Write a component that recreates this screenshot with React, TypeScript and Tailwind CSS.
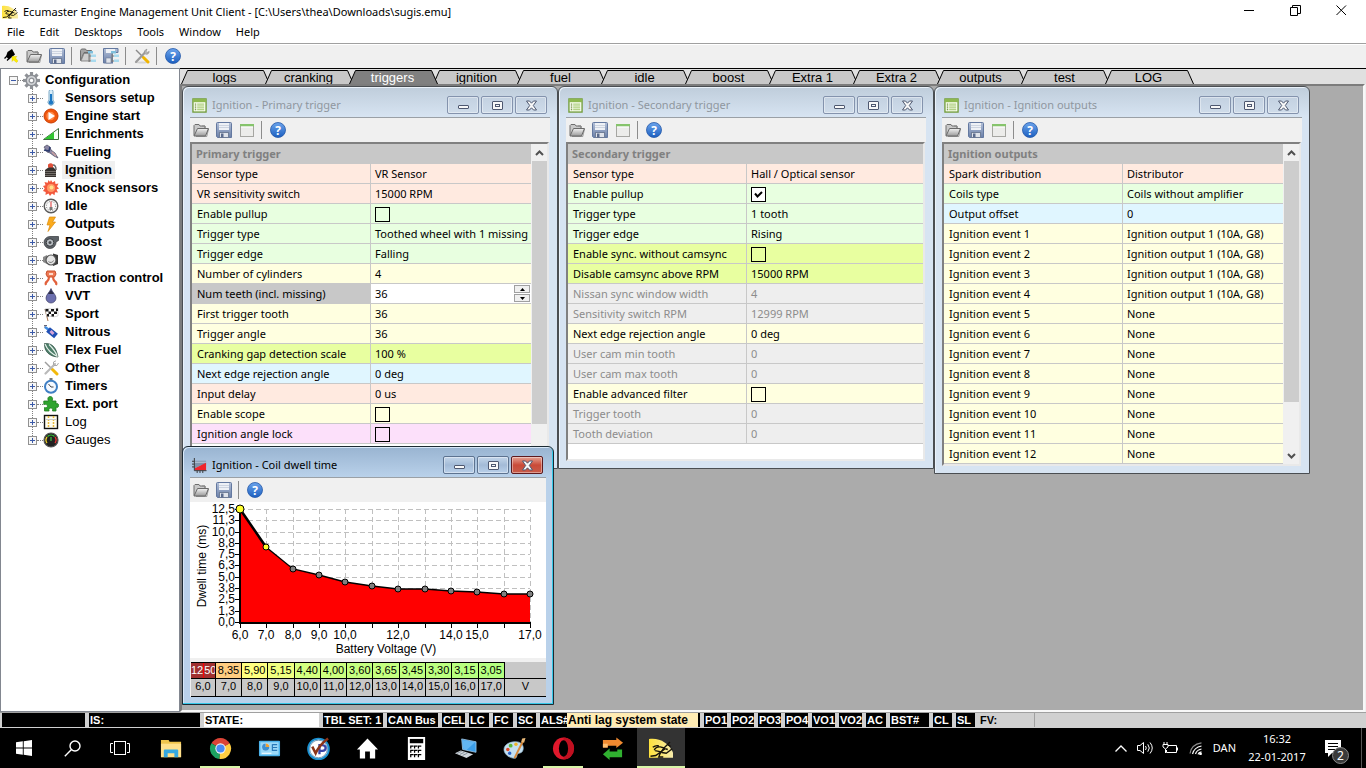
import { useState } from "react";
import type { ReactNode } from "react";

// Row tints used by the property grids
const TINT = {
  pink: "bg-[#ffeae0] text-black",
  green: "bg-[#e8ffe0] text-black",
  yellow: "bg-[#ffffe0] text-black",
  lime: "bg-[#e8ffa0] text-black",
  blue: "bg-[#e0f6ff] text-black",
  magenta: "bg-[#fce0fa] text-black",
  off: "bg-[#eeeeee] text-[#8c8c8c]",
};

type Row = {
  label: string;
  tint: keyof typeof TINT;
  value?: string;
  checked?: boolean;
  spin?: boolean;
};

const MENU = ["File", "Edit", "Desktops", "Tools", "Window", "Help"];

const TABS = [
  "logs",
  "cranking",
  "triggers",
  "ignition",
  "fuel",
  "idle",
  "boost",
  "Extra 1",
  "Extra 2",
  "outputs",
  "test",
  "LOG",
];

const PRIMARY: Row[] = [
  { label: "Sensor type", tint: "pink", value: "VR Sensor" },
  { label: "VR sensitivity switch", tint: "pink", value: "15000 RPM" },
  { label: "Enable pullup", tint: "green", checked: false },
  { label: "Trigger type", tint: "green", value: "Toothed wheel with 1 missing" },
  { label: "Trigger edge", tint: "green", value: "Falling" },
  { label: "Number of cylinders", tint: "yellow", value: "4" },
  { label: "Num teeth (incl. missing)", tint: "yellow", value: "36", spin: true },
  { label: "First trigger tooth", tint: "yellow", value: "36" },
  { label: "Trigger angle", tint: "yellow", value: "36" },
  { label: "Cranking gap detection scale", tint: "lime", value: "100 %" },
  { label: "Next edge rejection angle", tint: "blue", value: "0 deg" },
  { label: "Input delay", tint: "pink", value: "0 us" },
  { label: "Enable scope", tint: "yellow", checked: false },
  { label: "Ignition angle lock", tint: "magenta", checked: false },
];

const SECONDARY: Row[] = [
  { label: "Sensor type", tint: "pink", value: "Hall / Optical sensor" },
  { label: "Enable pullup", tint: "green", checked: true },
  { label: "Trigger type", tint: "green", value: "1 tooth" },
  { label: "Trigger edge", tint: "green", value: "Rising" },
  { label: "Enable sync. without camsync", tint: "lime", checked: false },
  { label: "Disable camsync above RPM", tint: "lime", value: "15000 RPM" },
  { label: "Nissan sync window width", tint: "off", value: "4" },
  { label: "Sensitivity switch RPM", tint: "off", value: "12999 RPM" },
  { label: "Next edge rejection angle", tint: "yellow", value: "0 deg" },
  { label: "User cam min tooth", tint: "off", value: "0" },
  { label: "User cam max tooth", tint: "off", value: "0" },
  { label: "Enable advanced filter", tint: "yellow", checked: false },
  { label: "Trigger tooth", tint: "off", value: "0" },
  { label: "Tooth deviation", tint: "off", value: "0" },
];

const OUTPUTS: Row[] = [
  { label: "Spark distribution", tint: "pink", value: "Distributor" },
  { label: "Coils type", tint: "green", value: "Coils without amplifier" },
  { label: "Output offset", tint: "blue", value: "0" },
  ...Array.from({ length: 12 }, (_, i): Row => ({
    label: `Ignition event ${i + 1}`,
    tint: "yellow",
    value: i < 4 ? "Ignition output 1 (10A, G8)" : "None",
  })),
];

/* ---------- small icons ---------- */

function Svg({ children, size = 16 }: { children: ReactNode; size?: number }) {
  return (
    <svg width={size} height={size} viewBox="0 0 16 16" aria-hidden className="block shrink-0">
      {children}
    </svg>
  );
}

function FolderIcon() {
  return (
    <Svg>
      <path d="M1 13.5V3.5L2 2.5h4l1 1.5h5v3" fill="#c9c9c9" stroke="#6e6e6e" />
      <path d="M9 4l3 0 0 3" fill="none" stroke="#8a8a8a" />
      <path d="M1 14L4.5 6.5H15.5L12.5 14Z" fill="url(#fold)" stroke="#6a6a6a" />
      <path d="M15.5 7L13.8 14.5H3" fill="none" stroke="#555" strokeOpacity=".5" />
    </Svg>
  );
}

function SaveIcon() {
  return (
    <Svg>
      <path d="M.5 1.5Q.5.5 1.5.5h13q1 0 1 1v14H1.5l-1-1Z" fill="url(#flop)" stroke="#6479a0" />
      <rect x="3" y="1" width="10" height="7" fill="#eef1f6" />
      <path d="M3 3.5h10M3 5.5h10" stroke="#cdd4e0" />
      <rect x="3.5" y="10.5" width="9" height="5" fill="#dfe3ea" stroke="#707e98" />
      <rect x="5" y="11.5" width="2.5" height="4" fill="#5a6a8c" />
    </Svg>
  );
}

function SheetIcon() {
  return (
    <Svg>
      <rect x="1.5" y="2.5" width="13" height="12" fill="#ececea" stroke="#a6a6a2" />
      <rect x="1" y="2" width="14" height="2.5" fill="#86c46c" />
      <path d="M2 5h12" stroke="#fff" />
    </Svg>
  );
}

function HelpIcon() {
  return (
    <Svg>
      <circle cx="8" cy="8" r="7.5" fill="url(#help)" stroke="#2458a8" strokeWidth=".8" />
      <text x="8" y="12.5" textAnchor="middle" fill="#fff" fontSize="12" fontWeight="bold" fontFamily="Open Sans, sans-serif">
        ?
      </text>
    </Svg>
  );
}

function PlugIcon() {
  return (
    <Svg>
      <path d="M4.500 4L9 1l3 5.500L6 11.500 3 8.500Z" fill="#000" />
      <path d="M4 8L1.500 10.500M6 10.500l-2 2" stroke="#000" strokeWidth="1.300" />
      <path d="M9 8.500h5L12.500 10l2.500 3-1.500 1.500-3-2.500L9 13.500Z" fill="#ffee00" stroke="#d8c800" strokeWidth=".4" />
    </Svg>
  );
}

function TreeOverlay() {
  return (
    <g>
      <path d="M9 5v9M9 8h3M9 13h3" stroke="#777" fill="none" />
      <rect x="8" y="3" width="5" height="2.500" fill="#7fbfdc" />
      <rect x="11" y="6.500" width="5" height="2.500" fill="#a8daee" />
      <rect x="11" y="11.500" width="5" height="2.500" fill="#a8daee" />
    </g>
  );
}

function FolderTreeIcon() {
  return (
    <Svg>
      <path d="M.5 12.500V2.500L1.500 1h4l1 1.500h5v2H4Z" fill="#a5a5a5" stroke="#6e6e6e" />
      <path d="M1 13L4 5.500h6V13Z" fill="#cfcfcf" stroke="#777" strokeWidth=".8" />
      <TreeOverlay />
    </Svg>
  );
}

function SaveTreeIcon() {
  return (
    <Svg>
      <path d="M.5.5h14.500v4H10v10.500H.5Z" fill="url(#flop)" stroke="#6479a0" />
      <rect x="3" y="1" width="9" height="4" fill="#eef1f6" />
      <rect x="3" y="10" width="5" height="5" fill="#dfe3ea" stroke="#707e98" strokeWidth=".6" />
      <path d="M10 5h6v11h-6Z" fill="#f0f0f0" />
      <TreeOverlay />
    </Svg>
  );
}

function ToolsIcon() {
  return (
    <Svg>
      <ellipse cx="8" cy="14.500" rx="6" ry="1" fill="#000" opacity=".12" />
      <path d="M2 2l8 8" stroke="#8b8b8b" strokeWidth="1.400" />
      <path d="M9.500 9.500l4.500 4.500" stroke="#f0b400" strokeWidth="3" strokeLinecap="round" />
      <path d="M2 14l9-9.500" stroke="#9b9b9b" strokeWidth="2.200" strokeLinecap="round" />
      <path d="M10.500 5.500c-.8-2 .5-4 2.500-4.300L12 3.200l1.200 1.200 2-1c0 2.300-2 3.500-4 2.600" fill="#b5b5b5" stroke="#7c7c7c" strokeWidth=".5" />
    </Svg>
  );
}

function GridWinIcon() {
  return (
    <Svg>
      <rect x="1" y="1" width="14" height="14" fill="#fbfff2" stroke="#6f9a36" strokeWidth="1.400" />
      <rect x="1" y="1" width="14" height="3.500" fill="#8db84f" />
      <path d="M3 6.500h1.500M3 8.500h1.500M3 10.500h1.500M3 12.500h1.500" stroke="#55761f" />
      <path d="M5.500 6.500H13M5.500 8.500H13M5.500 10.500H13M5.500 12.500H13" stroke="#98c05e" />
    </Svg>
  );
}

function ChartWinIcon() {
  return (
    <Svg>
      <path d="M3 3h12v4L9 8l-6 3Z" fill="#7f93ab" />
      <path d="M3 4.500h12" stroke="#c3cfdd" />
      <path d="M3 11L8 8.500 15 5v8H3Z" fill="#f0242c" />
      <path d="M2.500 0v13.500H15.500M0 3.500h2.500M0 6.500h2.500M0 9.500h2.500M5.500 13.500V16M8.500 13.500V16M11.500 13.500V16" stroke="#333" fill="none" />
    </Svg>
  );
}

function EcuLogo({ size = 16 }: { size?: number }) {
  return (
    <Svg size={size}>
      <path d="M0 2c7-1 13 2.500 16 9v3.500H0Z" fill="url(#ecu)" />
      <path
        d="M1 13.500l3.500-.5 3.500-2.500-4-.8M3.500 9.500q1-2.500 4-2.200L10 8l4-4M10 8l-2.500 3.500-1 2.500h3M8.500 11l3 .5 4-3M12 5.500l2.500 1.500M11 8.500l1.500.5M2.500 7.500q2-1.500 4-1"
        stroke="#17130a"
        strokeWidth=".9"
        fill="none"
      />
      <path d="M4.500 13l3.500-3 2.500-2.500.8 1.200L8 11Z" fill="#17130a" />
    </Svg>
  );
}

/* ---------- tree ---------- */

const gearTeeth = [0, 45, 90, 135, 180, 225, 270, 315];

const TREE: { label: string; icon: ReactNode; plain?: boolean }[] = [
  {
    label: "Sensors setup",
    icon: (
      <>
        <path d="M6 1.500a2 2 0 0 1 4 0v8.500a3 3 0 1 1-4 0Z" fill="#d9edf8" stroke="#7da9c6" />
        <path d="M8 4v8" stroke="#1d78c4" strokeWidth="2" />
        <circle cx="8" cy="12.500" r="2.200" fill="#1d78c4" />
      </>
    ),
  },
  {
    label: "Engine start",
    icon: (
      <>
        <circle cx="8" cy="8" r="7" fill="#f0560c" stroke="#c93e04" />
        <circle cx="7.500" cy="8" r="4.200" fill="#ff8a4a" />
        <path d="M5.500 4v8l6.500-4Z" fill="#fff" />
      </>
    ),
  },
  {
    label: "Enrichments",
    icon: (
      <>
        <path d="M.5 13.500L15.500 2.500v11Z" fill="#f4fff4" stroke="#3d6b3d" />
        <path d="M1.500 13L11 6v7Z" fill="#2fc62f" />
      </>
    ),
  },
  {
    label: "Fueling",
    icon: (
      <>
        <path d="M1 3l3-2 3 2 1 3 4 3 3 5-4-2-4-3-3-1Z" fill="#8b86a5" stroke="#4b4a60" strokeWidth=".7" />
        <path d="M1 6l5 1 1-4" stroke="#2d3c70" strokeWidth="1.600" fill="none" />
        <path d="M9 8l4 4" stroke="#c9a0a0" strokeWidth="1.600" />
      </>
    ),
  },
  {
    label: "Ignition",
    icon: (
      <>
        <path d="M2 15V8l4-3h4l3 3v7Z" fill="#37322f" />
        <path d="M2 9.500h11M2 11.500h11M2 13.500h11" stroke="#8f8984" strokeWidth=".7" />
        <path d="M5 5.500V2.500q3-2.500 5 0v3Z" fill="#e0503a" />
        <path d="M10 3q3 0 3 5" stroke="#666" fill="none" strokeWidth="1.500" />
      </>
    ),
  },
  {
    label: "Knock sensors",
    icon: (
      <>
        <path
          d="M8 0l1.500 2.500L12 1l.5 3 3-.5L14 6.500l2 2-2.500 1L15 12.500l-3-.3-.5 3L9 13.500 7 16l-1.500-2.500L2.500 15l.2-3L0 11l1.700-2.500L0 6l2.500-.8L1.500 2l3.200.8L5.500 0 7 2Z"
          fill="#f3583c"
        />
        <circle cx="8" cy="8" r="4" fill="#ff9a66" />
        <circle cx="8.500" cy="7.500" r="2" fill="#ffe08a" />
      </>
    ),
  },
  {
    label: "Idle",
    icon: (
      <>
        <circle cx="8" cy="8" r="6.800" fill="#fafafa" stroke="#5b5b5b" strokeWidth="1.400" />
        <circle cx="8" cy="8" r="4.600" fill="none" stroke="#777" strokeDasharray="1 1.400" />
        <path d="M8 9V3.500" stroke="#d33" />
        <rect x="6.500" y="9" width="3" height="3" fill="#777" />
      </>
    ),
  },
  {
    label: "Outputs",
    icon: <path d="M6.500 1h6L9.500 6h3L5 15.500 7 9H4Z" fill="#fbab1c" stroke="#d88a10" strokeWidth=".7" />,
  },
  {
    label: "Boost",
    icon: (
      <>
        <path d="M7 2.500h8.500v4L13 8a6 6 0 1 1-6-5.500Z" fill="#5d6268" stroke="#33373b" strokeWidth=".7" />
        <circle cx="7" cy="8.500" r="3.800" fill="#b9bec3" stroke="#3a3d40" />
        <circle cx="7" cy="8.500" r="1.500" fill="#4b4e52" />
      </>
    ),
  },
  {
    label: "DBW",
    icon: (
      <>
        <path d="M0 5l4-2v9l-4-2Z" fill="#888" />
        <path d="M10 1.500l5 1.500v9l-5 2Z" fill="#3b3b3b" />
        <circle cx="8" cy="8" r="5" fill="#e6e6e6" stroke="#555" strokeWidth="1.200" />
        <path d="M5.500 9.500a3 3 0 0 0 5-1" stroke="#777" fill="none" />
      </>
    ),
  },
  {
    label: "Traction control",
    icon: (
      <>
        <path d="M4 1h8l1 3-1.500 3h-7L3 4Z" fill="#ee7a55" stroke="#c7502d" />
        <path d="M6 7q0 3-2 4.500T3 15M10 7q0 3 2 4.500t1 3.500" stroke="#e2613c" strokeWidth="2.200" fill="none" />
        <path d="M6 3h4v2H6Z" fill="#ffd9c9" />
      </>
    ),
  },
  {
    label: "VVT",
    icon: (
      <>
        <path d="M8 .5c1 3.500 5 6 5 9.500a5 5 0 0 1-10 0C3 6.500 7 4 8 .5Z" fill="#6c6fae" stroke="#3c3e66" strokeWidth=".7" />
        <path d="M8 1c.5 2 2 3.500 3 5H5c1-1.500 2.500-3 3-5Z" fill="#2e2f48" />
      </>
    ),
  },
  {
    label: "Sport",
    icon: (
      <>
        <path d="M2 3l3 12" stroke="#a7744e" />
        <path d="M2 3c4-2 8 2 13-1v8c-5 2-8-1-11 1Z" fill="#fff" stroke="#999" strokeWidth=".4" />
        <path
          d="M2.500 3h3v2.500h-3ZM8 3h3v2.500H8ZM5.500 5.500H8V8H5.500ZM11 5.500h3V8h-3ZM4 8h2v2.500H4ZM8.500 8h2.500v2.500H8.500ZM13 2.500h2V5h-2Z"
          fill="#161616"
        />
      </>
    ),
  },
  {
    label: "Nitrous",
    icon: (
      <>
        <path d="M1 1.500h3M2 1v3" stroke="#667" />
        <path d="M2 3l4 3" stroke="#3f8ce0" strokeWidth="2.600" />
        <path d="M5 5.500l8 6.500" stroke="#1f4fb4" strokeWidth="6" strokeLinejoin="round" />
        <path d="M7.500 7l3 3" stroke="#d7a4d8" strokeWidth="3" />
      </>
    ),
  },
  {
    label: "Flex Fuel",
    icon: (
      <>
        <path d="M1.500 1.500C8 1 13 4 15 15 7 14.500 1 10 1.500 1.500Z" fill="#4b7d68" stroke="#2c4d40" strokeWidth=".7" />
        <path d="M2 2c2 5 7 10 12.500 12.500M6 2.500c3 3 6 6 8 11" stroke="#e5efe9" fill="none" strokeWidth="1.200" />
      </>
    ),
  },
  {
    label: "Other",
    icon: (
      <>
        <path d="M2 2l8 8" stroke="#9d9d9d" strokeWidth="1.500" />
        <path d="M9.500 9.500l4.500 4.500" stroke="#f2b90b" strokeWidth="3" strokeLinecap="round" />
        <path d="M2.500 13.500L12 4" stroke="#b9b9b9" strokeWidth="2.200" strokeLinecap="round" />
        <path d="M10.500 5V2L13 .8M11 5.500h3l1.500-2.500" stroke="#aaa" fill="none" />
      </>
    ),
  },
  {
    label: "Timers",
    icon: (
      <>
        <rect x="6.500" y="0" width="3" height="2.500" fill="#777" />
        <circle cx="8" cy="8.800" r="6" fill="#f5f9ff" stroke="#3f7fc4" strokeWidth="2" />
        <path d="M5.500 6l2.500 3h2.500" stroke="#444" fill="none" />
      </>
    ),
  },
  {
    label: "Ext. port",
    icon: (
      <path
        d="M.8 5h4.700C4 2 5.500.5 7.200.5S10.500 2 9 5h4v3c1.500-1 2.700 0 2.700 1.500s-1.200 2.500-2.700 1.500V15H9.500c.8-2-.5-3-1.700-3s-2.500 1-1.700 3H1.500v-3.500c2 .8 3-.3 3-1.500S3 8 .8 8.500Z"
        fill="#2fa42f"
        stroke="#1f7a1f"
        strokeWidth=".8"
      />
    ),
  },
  {
    label: "Log",
    plain: true,
    icon: (
      <>
        <rect x="1.500" y="1.500" width="13" height="13" fill="#fffdf0" stroke="#111" strokeWidth="1.400" />
        <path d="M5.500 2v12M10.500 2v12" stroke="#e7b93d" strokeWidth="1.500" strokeDasharray="2 1" />
        <path d="M2 5.500h12" stroke="#ccc" />
      </>
    ),
  },
  {
    label: "Gauges",
    plain: true,
    icon: (
      <>
        <circle cx="8" cy="8" r="7" fill="#222" stroke="#555" strokeWidth="1.200" />
        <path d="M4 11a5 5 0 0 1 0-6" stroke="#f2d32b" strokeWidth="1.300" fill="none" />
        <path d="M4.500 4.500a5 5 0 0 1 7 0" stroke="#35c435" strokeWidth="1.300" fill="none" />
        <path d="M12 5a5 5 0 0 1 0 6" stroke="#e33" strokeWidth="1.300" fill="none" />
        <path d="M8 9V5" stroke="#4be04b" />
      </>
    ),
  },
];

function Expander({ open }: { open?: boolean }) {
  return (
    <button type="button" aria-label={open ? "Collapse" : "Expand"} className="z-10 block h-[9px] w-[9px] shrink-0">
      <svg width="9" height="9" viewBox="0 0 9 9" className="block" shapeRendering="crispEdges">
        <rect x=".5" y=".5" width="8" height="8" fill="#f7f7f7" stroke="#919191" />
        <path d={open ? "M2 4.500h5" : "M2 4.500h5M4.500 2v5"} stroke="#3b5aa8" />
      </svg>
    </button>
  );
}

function Sidebar() {
  return (
    <nav className="w-[180px] shrink-0 border border-[#828790] bg-white pt-[2px] font-['Liberation_Sans',sans-serif] text-[13px] leading-[18px] text-black">
      <div className="flex h-[18px] items-center pl-2">
        <Expander open />
        <span className="w-[5px] shrink-0 border-t border-dotted border-[#808080]" />
        <Svg size={17}>
          {gearTeeth.map((a) => (
            <rect key={a} x="6.500" y="0" width="3" height="4" fill="#8e9196" transform={`rotate(${a} 8 8)`} />
          ))}
          <circle cx="8" cy="8" r="5" fill="#d4d6d9" stroke="#8e9196" strokeWidth="1.400" />
          <circle cx="8" cy="8" r="2.200" fill="#fff" stroke="#8e9196" strokeWidth="1.200" />
        </Svg>
        <span className="ml-[5px] font-bold">Configuration</span>
      </div>
      <ul className="relative">
        <span className="absolute top-0 bottom-[9px] left-[31px] border-l border-dotted border-[#808080]" />
        {TREE.map((item) => (
          <li key={item.label} className="flex h-[18px] items-center pl-[27px]">
            <Expander />
            <span className="w-[6px] shrink-0 border-t border-dotted border-[#808080]" />
            <Svg>{item.icon}</Svg>
            <span
              className={`ml-[3px] px-[3px] ${item.plain ? "" : "font-bold"} ${
                item.label === "Ignition" ? "bg-[#f0f0f0]" : ""
              }`}
            >
              {item.label}
            </span>
          </li>
        ))}
      </ul>
    </nav>
  );
}

/* ---------- toolbars ---------- */

function ToolButton({ label, children }: { label: string; children: ReactNode }) {
  return (
    <button type="button" aria-label={label} className="flex h-full w-[23px] items-center pl-[3px]">
      {children}
    </button>
  );
}

function Separator() {
  return (
    <span className="flex w-2 pl-[2px]">
      <span className="h-[18px] border-l border-[#8c8c8c]" />
    </span>
  );
}

/* ---------- child windows ---------- */

function FrameButton({ kind, active }: { kind: "min" | "max" | "close"; active?: boolean }) {
  const tone = !active
    ? "border-[#8493ad] bg-linear-to-b from-[#c3d1e1] to-[#cfdcea]"
    : kind === "close"
      ? "border-[#5d1a1e] bg-linear-to-b from-[#e3a193] via-[#c94a38] to-[#c85c4a]"
      : "border-[#5d7390] bg-linear-to-b from-[#c4d6ea] via-[#a3bbd7] to-[#b9d0ea]";
  return (
    <button
      type="button"
      aria-label={kind}
      className={`flex h-[18px] w-8 items-center justify-center rounded-[2px] border shadow-[inset_0_0_0_1px_rgba(255,255,255,0.4)] ${tone}`}
    >
      <svg width="13" height="11" viewBox="0 0 13 11" fill="#f8f8f8" stroke="#4e5870">
        {kind === "min" && <rect x="1.500" y="5.500" width="10" height="3" rx=".5" />}
        {kind === "max" && (
          <>
            <rect x="1.500" y="1.500" width="10" height="8" rx=".5" />
            <rect x="4.500" y="4.500" width="4" height="2" />
          </>
        )}
        {kind === "close" && (
          <path d="M1.500 1h3L6.500 3.200 8.500 1h3L8.300 5.500 11.500 10h-3L6.500 7.800 4.500 10h-3L4.700 5.500Z" />
        )}
      </svg>
    </button>
  );
}

function ChildWindow({
  title,
  icon,
  place,
  active,
  sheet,
  children,
}: {
  title: string;
  icon: ReactNode;
  place: string;
  active?: boolean;
  sheet?: boolean;
  children: ReactNode;
}) {
  return (
    <section
      className={`absolute flex flex-col overflow-hidden rounded-t-md border px-[7px] pb-[7px] ${
        active
          ? "border-[#1c2a33] bg-[#b9d1ea] bg-linear-to-b from-[#99b4d1] to-[#b9d1ea] to-[30px] shadow-[inset_-1px_-1px_0_#35c8e8,inset_1px_1px_0_#d8e8f8]"
          : "border-[#4a4e52] bg-[#d7e4f2] bg-linear-to-b from-[#bfcddb] to-[#d7e4f2] to-[30px] shadow-[inset_1px_1px_0_#eaf2fa]"
      } ${place}`}
    >
      <header className="flex h-[30px] shrink-0 items-center pt-[6px] pr-[3px] pl-[2px]">
        <Svg size={15}>{icon}</Svg>
        <h2 className={`ml-[5px] flex-1 ${active ? "text-black" : "text-[#8f979f]"}`}>{title}</h2>
        <div className="flex gap-[2px]">
          <FrameButton kind="min" active={active} />
          <FrameButton kind="max" active={active} />
          <FrameButton kind="close" active={active} />
        </div>
      </header>
      <div className="flex h-[25px] shrink-0 items-center border-t border-[#9aa0a6] bg-[#f0f0f0]">
        <ToolButton label="Open">
          <FolderIcon />
        </ToolButton>
        <ToolButton label="Save">
          <SaveIcon />
        </ToolButton>
        {sheet && (
          <ToolButton label="Restore defaults">
            <SheetIcon />
          </ToolButton>
        )}
        <Separator />
        <ToolButton label="Help">
          <HelpIcon />
        </ToolButton>
      </div>
      {children}
    </section>
  );
}

function CheckCell({ id, initial }: { id: string; initial: boolean }) {
  return (
    <span className="relative mt-px block h-[15px] w-[15px]">
      <input
        id={id}
        type="checkbox"
        defaultChecked={initial}
        className="peer block h-[15px] w-[15px] appearance-none border border-black checked:bg-white"
      />
      <svg
        viewBox="0 0 15 15"
        className="pointer-events-none absolute inset-0 hidden peer-checked:block"
        fill="none"
        stroke="#000"
        strokeWidth="2"
      >
        <path d="M4 6.500l2.500 3L11 5" />
      </svg>
    </span>
  );
}

function SpinCell({ id, initial }: { id: string; initial: string }) {
  const [value, setValue] = useState(initial);
  const step = (d: number) => setValue((v) => String(Number(v) + d));
  return (
    <span className="flex h-[19px] items-center">
      <input
        id={id}
        value={value}
        onChange={(e) => setValue(e.target.value)}
        className="h-[19px] min-w-0 flex-1 bg-white outline-none"
      />
      <span className="mr-px flex w-4 flex-col gap-px">
        {[1, -1].map((d) => (
          <button
            key={d}
            type="button"
            aria-label={d > 0 ? "Increase" : "Decrease"}
            onClick={() => step(d)}
            className="flex h-2 items-center justify-center border border-[#a0a0a0] bg-[#f0f0f0]"
          >
            <svg width="5" height="3" viewBox="0 0 5 3">
              <path d={d > 0 ? "M0 3h5L2.500 0Z" : "M0 0h5L2.500 3Z"} />
            </svg>
          </button>
        ))}
      </span>
    </span>
  );
}

function ScrollBar({ thumb }: { thumb: string }) {
  return (
    <div className="flex w-4 shrink-0 flex-col bg-[#f0f0f0]">
      <button type="button" aria-label="Scroll up" className="flex h-[17px] shrink-0 items-center justify-center">
        <svg width="9" height="6" viewBox="0 0 9 6" fill="none" stroke="#505050" strokeWidth="2">
          <path d="M1 5l3.500-3.500L8 5" />
        </svg>
      </button>
      <span className={`ml-px block bg-[#cdcdcd] ${thumb}`} />
      <button type="button" aria-label="Scroll down" className="mt-auto flex h-[17px] shrink-0 items-center justify-center">
        <svg width="9" height="6" viewBox="0 0 9 6" fill="none" stroke="#505050" strokeWidth="2">
          <path d="M1 1l3.500 3.500L8 1" />
        </svg>
      </button>
    </div>
  );
}

function PropertyGrid({ id, title, rows, thumb }: { id: string; title: string; rows: Row[]; thumb?: string }) {
  return (
    <div className="mr-px flex min-h-0 flex-1 overflow-hidden border-2 border-t-[#808080] border-r-[#e9e9e9] border-b-[#e9e9e9] border-l-[#808080] bg-white">
      <div className="min-w-0 flex-1 overflow-hidden">
        <table className="w-full table-fixed border-separate border-spacing-0 leading-[19px]">
          <colgroup>
            <col className="w-[178px]" />
            <col />
          </colgroup>
          <thead>
            <tr>
              <th colSpan={2} className="h-5 bg-[#c8c8c8] p-0 pb-px pl-1 text-left font-bold text-[#808080]">
                {title}
              </th>
            </tr>
          </thead>
          <tbody>
            {rows.map((row, i) => {
              const field = `${id}-${i}`;
              return (
                <tr key={row.label} className={TINT[row.tint]}>
                  <td
                    className={`h-5 border-b border-[#c8c8c8] p-0 pl-[5px] whitespace-nowrap ${row.spin ? "bg-[#c8c8c8]" : ""}`}
                  >
                    {row.checked !== undefined || row.spin ? <label htmlFor={field}>{row.label}</label> : row.label}
                  </td>
                  <td
                    className={`h-5 overflow-hidden border-b border-l border-[#c8c8c8] p-0 pl-1 whitespace-nowrap ${row.spin ? "bg-white" : ""}`}
                  >
                    {row.checked !== undefined ? (
                      <CheckCell id={field} initial={row.checked} />
                    ) : row.spin ? (
                      <SpinCell id={field} initial={row.value ?? ""} />
                    ) : (
                      row.value
                    )}
                  </td>
                </tr>
              );
            })}
          </tbody>
        </table>
      </div>
      {thumb && <ScrollBar thumb={thumb} />}
    </div>
  );
}

/* ---------- dwell chart ---------- */

const DWELL = [12.5, 8.35, 5.9, 5.15, 4.4, 4.0, 3.6, 3.65, 3.45, 3.3, 3.15, 3.05];
const Y_LABELS = ["0,0", "1,3", "2,5", "3,8", "5,0", "6,3", "7,5", "8,8", "10,0", "11,3", "12,5"];
const X_LABELS = ["6,0", "7,0", "8,0", "9,0", "10,0", "", "12,0", "", "14,0", "15,0", "", "17,0"];

const CELL_TONES = [
  "bg-[#a03030]",
  "bg-[#ffcc80]",
  "bg-[#ffff80]",
  "bg-[#efff80]",
  "bg-[#d4ff80]",
  "bg-[#ccff80]",
  "bg-[#c4ff80]",
  "bg-[#c4ff80]",
  "bg-[#c0ff80]",
  "bg-[#bcff80]",
  "bg-[#b8ff80]",
  "bg-[#b4ff80]",
];

const chartX = (i: number) => 50 + Math.round((i * 290) / 11);
const chartY = (v: number) => 120 - Math.round((v / 12.5) * 113);
const comma = (v: number, digits: number) => v.toFixed(digits).replace(".", ",");

function DwellChart() {
  const points = DWELL.map((v, i) => `${chartX(i)},${chartY(v)}`).join(" ");
  return (
    <svg
      viewBox="0 0 356 156"
      className="block h-[156px] w-full shrink-0 bg-white font-['Liberation_Sans',sans-serif] text-[12px]"
    >
      <g stroke="#c0c0c0" strokeDasharray="5 3" shapeRendering="crispEdges">
        {Y_LABELS.slice(1).map((l, i) => (
          <path key={l} d={`M50 ${chartY((i + 1) * 1.25) + 0.5}H340`} />
        ))}
        {DWELL.slice(1).map((_, i) => (
          <path key={i} d={`M${chartX(i + 1) + 0.5} 7V120`} />
        ))}
      </g>
      <polygon points={`50,120 ${points} 340,120`} fill="#ff0000" />
      <polyline points={points} fill="none" stroke="#000" strokeWidth="1.300" />
      <path d={`M50 7L${chartX(1)} ${chartY(8.35)}`} stroke="#000" strokeWidth="2.500" />
      <path d="M50 7V121H341" fill="none" stroke="#000" strokeWidth="2" shapeRendering="crispEdges" />
      {Y_LABELS.map((l, i) => (
        <g key={l}>
          <path d={`M45 ${chartY(i * 1.25) + 0.5}h5`} stroke="#000" shapeRendering="crispEdges" />
          <text x="45" y={chartY(i * 1.25) + 4} textAnchor="end">
            {l}
          </text>
        </g>
      ))}
      {X_LABELS.map((l, i) => (
        <g key={i}>
          <path d={`M${chartX(i) + 0.5} 121v5`} stroke="#000" shapeRendering="crispEdges" />
          <text x={chartX(i)} y="137" textAnchor="middle">
            {l}
          </text>
        </g>
      ))}
      {DWELL.map((v, i) => (
        <circle
          key={i}
          cx={chartX(i)}
          cy={chartY(v)}
          r={i === 0 ? 4 : 3}
          fill={i < 2 ? "#ffff30" : "#808080"}
          stroke="#000"
        />
      ))}
      <text x="196" y="151" textAnchor="middle">
        Battery Voltage (V)
      </text>
      <text transform="translate(16 64) rotate(-90)" textAnchor="middle">
        Dwell time (ms)
      </text>
    </svg>
  );
}

function DwellTable() {
  return (
    <table className="w-full table-fixed border-separate border-spacing-0 bg-[#c8c8c8] text-center font-['Liberation_Sans',sans-serif] text-[11px] leading-[15px] text-black">
      <tbody>
        <tr>
          {DWELL.map((v, i) => (
            <td
              key={i}
              className={`h-4 overflow-hidden border-t border-r border-b border-black p-0 ${CELL_TONES[i]} ${
                i === 0 ? "w-[7%] text-white" : "w-[7.4%]"
              }`}
            >
              {i === 0 ? (
                <span className="flex overflow-hidden">
                  <span className="border-r border-[#ff0000]">12</span>
                  <span>50</span>
                </span>
              ) : (
                comma(v, 2)
              )}
            </td>
          ))}
          <td className="border-b border-black p-0" />
        </tr>
        <tr>
          {DWELL.map((_, i) => (
            <td key={i} className="h-[18px] border-r border-b border-black p-0 pb-[2px]">
              {comma(i + 6, 1)}
            </td>
          ))}
          <td className="border-b border-black p-0 pb-[2px]">V</td>
        </tr>
      </tbody>
    </table>
  );
}

/* ---------- desktop tabs ---------- */

function DesktopTabs() {
  const [current, setCurrent] = useState("triggers");
  return (
    <div className="flex h-4 border-t border-black bg-[#e0e0e0] pt-px pl-px" role="tablist">
      {TABS.map((tab) => {
        const on = tab === current;
        return (
          <button
            key={tab}
            type="button"
            role="tab"
            aria-selected={on}
            onClick={() => setCurrent(tab)}
            className={`relative -mr-[5px] h-[14px] w-[89px] pr-[2px] font-['Liberation_Sans',sans-serif] text-[13px] leading-[15px] ${
              on ? "z-10 text-white" : "text-black"
            }`}
          >
            <svg width="89" height="14" viewBox="0 0 89 14" className="absolute inset-0">
              <path d="M.5 14L6.500.5H82.500L88.500 14" fill={on ? "#808080" : "#c8c8c8"} stroke="#000" />
            </svg>
            <span className="relative">{tab}</span>
          </button>
        );
      })}
    </div>
  );
}

/* ---------- status bar ---------- */

const STATUS: { text: string; width: string; tone?: string; tip?: string }[] = [
  { text: "", width: "w-[83px]" },
  { text: "IS:", width: "w-[111px]" },
  { text: "STATE:", width: "w-[115px]", tone: "bg-white text-black" },
  { text: "TBL SET: 1", width: "w-[60px]" },
  { text: "CAN Bus", width: "w-[51px]" },
  { text: "CEL", width: "w-[23px]" },
  { text: "LC", width: "w-[20px]" },
  { text: "FC", width: "w-[20px]" },
  { text: "SC", width: "w-[19px]" },
  { text: "ALS#", width: "w-[160px]", tip: "Anti lag system state" },
  { text: "PO1", width: "w-[23px]" },
  { text: "PO2", width: "w-[23px]" },
  { text: "PO3", width: "w-[23px]" },
  { text: "PO4", width: "w-[23px]" },
  { text: "VO1", width: "w-[23px]" },
  { text: "VO2", width: "w-[23px]" },
  { text: "AC", width: "w-[20px]" },
  { text: "BST#", width: "w-[39px]" },
  { text: "CL", width: "w-[19px]" },
  { text: "SL", width: "w-[19px]" },
  { text: "FV:", width: "w-[56px]", tone: "border-r border-[#a0a0a0] text-black" },
];

function StatusBar() {
  return (
    <footer className="flex h-4 shrink-0 gap-1 border-t border-[#a0a0a0] bg-[#d0d0d0] pl-[2px] font-['Liberation_Sans',sans-serif] text-[11px] leading-[15px] font-bold">
      {STATUS.map((cell, i) => (
        <div
          key={i}
          className={`relative h-[14px] shrink-0 pl-px whitespace-nowrap ${cell.width} ${cell.tone ?? "bg-black text-white"}`}
        >
          {cell.text}
          {cell.tip && (
            <span role="tooltip" className="absolute top-0 left-[27px] h-[14px] w-[131px] bg-[#ffecb4] pl-px text-[12px] leading-[14px] text-black">
              {cell.tip}
            </span>
          )}
        </div>
      ))}
    </footer>
  );
}

/* ---------- windows taskbar ---------- */

const APPS: { name: string; open?: boolean; icon: ReactNode }[] = [
  {
    name: "File Explorer",
    icon: (
      <>
        <path d="M1 3h8l1 2h12v16H1Z" fill="#f0c44c" />
        <path d="M1 7h21v14H1Z" fill="#ffe08c" />
        <path d="M4 21v-7q0-1 1-1h13q1 0 1 1v7h-4v-4H8v4Z" fill="#35a8e0" />
      </>
    ),
  },
  {
    name: "Chrome",
    open: true,
    icon: (
      <>
        <path d="M12 12L2.500 6.500A11 11 0 0 1 21.500 6.500Z" fill="#dc4437" />
        <path d="M12 12L2.500 6.500A11 11 0 0 0 11 23Z" fill="#1da362" />
        <path d="M12 12L11 23A11 11 0 0 0 21.500 6.500Z" fill="#ffcd42" />
        <path d="M12 6.500h9.500L12 12Z" fill="#dc4437" />
        <circle cx="12" cy="12" r="5.400" fill="#f2f2f2" />
        <circle cx="12" cy="12" r="4.300" fill="#4a8af4" />
      </>
    ),
  },
  {
    name: "Control Panel",
    icon: (
      <>
        <rect x="1" y="4" width="22" height="16" rx="1" fill="#4cb2ea" />
        <rect x="2.500" y="5.500" width="19" height="13" fill="#9bd9f8" />
        <circle cx="8" cy="10.500" r="3.800" fill="#fff" />
        <path d="M8 10.500V6.700a3.800 3.800 0 0 1 3.800 3.800Z" fill="#f0a030" />
        <path d="M8 10.500h3.800A3.800 3.800 0 1 1 8 6.700Z" fill="#3d8fd0" />
        <path d="M15 8h5M15 11h5M15 14h5M15 7.500v7" stroke="#2878b8" strokeWidth="1.200" />
        <path d="M4 17h10" stroke="#f5fcff" strokeWidth="1.200" />
      </>
    ),
  },
  {
    name: "VP",
    icon: (
      <>
        <circle cx="12" cy="12.500" r="10.800" fill="#fff" stroke="#1a90d0" strokeWidth="2" />
        <circle cx="12" cy="12.500" r="9.200" fill="none" stroke="#0a4a80" strokeWidth=".6" />
        <path d="M13 18V8.500h3q3.500.3 3.500 3t-3.500 3h-3" stroke="#3944a8" strokeWidth="2.400" fill="none" />
        <path d="M5.500 10l3.500 7Q13 8 22 1.500" stroke="#8c3418" strokeWidth="2.600" fill="none" />
      </>
    ),
  },
  { name: "Home", icon: <path d="M12 1.500L23 13h-3v9.500h-5.500V15h-5v7.500H4V13H1Z" fill="#fff" /> },
  {
    name: "Calculator",
    icon: (
      <>
        <rect x="3" y="0" width="18" height="24" fill="#fff" />
        <rect x="5" y="2" width="14" height="4.500" fill="#000" />
        {[9, 13.5, 18].map((y) =>
          [6, 10, 14].map((x) => <path key={`${x}-${y}`} d={`M${x} ${y + 3}V${y + 0.5}h3`} stroke="#000" strokeWidth="1.300" fill="none" />),
        )}
      </>
    ),
  },
  {
    name: "Computer",
    icon: (
      <>
        <path d="M8 2l15 3v11L9 13Z" fill="#3c9ee8" stroke="#a8cdea" strokeWidth=".8" />
        <path d="M9 3l13 2.600-9 8L9.500 12Z" fill="#7cc6f8" opacity=".6" />
        <path d="M1 17l6-3 13 4L13 22Z" fill="#d2d8de" />
        <path d="M3 17.200l5-2.300M6 18.200l5-2.300M9 19.200l5-2.300" stroke="#75808a" strokeWidth=".8" />
      </>
    ),
  },
  {
    name: "Paint",
    icon: (
      <>
        <path d="M11 5c7-1 11 3 10 8s-5 3-6 5 0 5-5 4S1 17 1 13s4-7.300 10-8Z" fill="#c4dff0" stroke="#8fb4cc" strokeWidth=".7" />
        <circle cx="8" cy="9" r="2" fill="#5cb838" />
        <circle cx="13.500" cy="7.500" r="1.800" fill="#f0b428" />
        <circle cx="5" cy="13" r="1.800" fill="#e04828" />
        <circle cx="7" cy="17" r="1.800" fill="#2860c8" />
        <path d="M12 22L20.500 5" stroke="#d88838" strokeWidth="2" />
        <path d="M19 5l1-3.500 3.500-.5-1.500 5Z" fill="#e8b878" />
      </>
    ),
  },
  {
    name: "Opera",
    open: true,
    icon: (
      <>
        <ellipse cx="12" cy="12" rx="11" ry="11.500" fill="#e0182c" />
        <path d="M12 .5a11 11.500 0 0 1 0 23Z" fill="#c01020" />
        <ellipse cx="12" cy="12" rx="4.800" ry="8.500" fill="#000" />
      </>
    ),
  },
  {
    name: "Sync",
    icon: (
      <>
        <path d="M2 11V3h14V.5L23 6l-7 5.500V9H7v2Z" fill="#f08a30" />
        <path d="M2 11V7h5v4Z" fill="#ffc070" />
        <path d="M22 13v8H9v3l-7-6 7-6v3h8v-2Z" fill="#30b030" />
      </>
    ),
  },
];

function Taskbar() {
  return (
    <div className="flex h-10 shrink-0 items-stretch bg-black text-white">
      <button type="button" aria-label="Start" className="flex w-12 items-center justify-center">
        <svg width="16" height="16" viewBox="0 0 16 16" fill="#fff">
          <path d="M0 2.300L6.800 1.300v6.200H0ZM7.700 1.200L16 0v7.500H7.700ZM0 8.400h6.800v6.300L0 13.700ZM7.700 8.400H16V16l-8.300-1.200Z" />
        </svg>
      </button>
      <button type="button" aria-label="Search" className="flex w-12 items-center justify-center">
        <svg width="17" height="17" viewBox="0 0 17 17" fill="none" stroke="#fff" strokeWidth="1.400">
          <circle cx="11" cy="6" r="5" />
          <path d="M7.500 9.500L.8 16.200" />
        </svg>
      </button>
      <button type="button" aria-label="Task view" className="flex w-12 items-center justify-center">
        <svg width="20" height="14" viewBox="0 0 20 14" fill="none" stroke="#fff">
          <rect x="4.500" y=".5" width="11" height="13" />
          <path d="M3 2.500H.5v9H3M17 2.500h2.500v9H17" />
        </svg>
      </button>
      <div className="ml-[3px] flex gap-px">
        {APPS.map((app) => (
          <button
            key={app.name}
            type="button"
            aria-label={app.name}
            className="relative flex w-12 items-center justify-center"
          >
            <svg width="23" height="23" viewBox="0 0 24 24">
              {app.icon}
            </svg>
            {app.open && <span className="absolute inset-x-1 bottom-0 h-[2px] bg-[#d8f5a8]" />}
          </button>
        ))}
        <button type="button" aria-label="Ecumaster" className="relative flex w-12 items-center justify-center bg-[#333333]">
          <EcuLogo size={24} />
          <span className="absolute inset-x-0 bottom-0 h-[2px] bg-[#d8f5a8]" />
        </button>
      </div>

      {/* Tray */}
      <div className="ml-auto flex items-center">
        <svg width="12" height="7" viewBox="0 0 12 7" fill="none" stroke="#fff" strokeWidth="1.300">
          <path d="M.5 6.500L6 1l5.500 5.500" />
        </svg>
        <svg width="17" height="14" viewBox="0 0 17 14" fill="none" stroke="#fff" className="ml-[10px]">
          <path d="M.5 4.500h2.500L6.500 1.500v11L3 9.500H.5Z" />
          <path d="M8.500 5q1.500 2 0 4M10.800 3.300q3 3.700 0 7.400M13 1.500q4.500 5.500 0 11" />
        </svg>
        <svg width="17" height="14" viewBox="0 0 17 14" fill="none" stroke="#fff" className="ml-2">
          <path d="M6 4.500h8.500v7H4.500V9M15.500 6.500v3" />
          <path d="M1 3.500h5V6L3.500 8 1 6ZM2 1v2.500M5 1v2.500M3.500 8v4" />
        </svg>
        <svg width="14" height="13" viewBox="0 0 14 13" fill="none" stroke="#fff" strokeWidth="1.200" className="ml-[10px]">
          <path d="M1 11.500Q2 2.500 12.500.8" opacity=".55" />
          <path d="M3.500 12Q5 5.500 12.500 4M6.500 12q1-4 6-5M9 12.300q.5-2 3.500-2.500" />
          <circle cx="11.500" cy="11.800" r=".8" fill="#fff" />
        </svg>
        <span className="ml-[10px]">DAN</span>
        <div className="ml-[11px] w-[60px] text-center leading-[18px] whitespace-nowrap">
          <div>16:32</div>
          <div>22-01-2017</div>
        </div>
        <button type="button" aria-label="2 notifications" className="mt-2 mr-[11px] ml-[17px]">
          <svg width="26" height="24" viewBox="0 0 26 24">
            <path d="M1 0h16v13H8l-4 4v-4H1Z" fill="#fff" />
            <path d="M4 3.500h10M4 6.500h10M4 9.500h7" stroke="#000" />
            <circle cx="16.500" cy="15.500" r="8" fill="#3a3a3a" stroke="#8a8a8a" />
            <text x="16.500" y="20" textAnchor="middle" fill="#fff" fontSize="12">
              2
            </text>
          </svg>
        </button>
        <span className="mr-1 h-10 border-l border-[#555555]" />
      </div>
    </div>
  );
}

export default function App() {
  return (
    <div className="flex min-h-screen flex-col bg-[#f0f0f0] font-['Noto_Sans',sans-serif] text-[11px] text-black">
      {/* Shared gradients for the icons */}
      <svg width="0" height="0" className="absolute" aria-hidden>
        <defs>
          <linearGradient id="fold" x2="0" y2="1">
            <stop stopColor="#f2f2f2" />
            <stop offset="1" stopColor="#9a9a9a" />
          </linearGradient>
          <linearGradient id="flop" x2="0" y2="1">
            <stop stopColor="#b3c0d8" />
            <stop offset="1" stopColor="#6b80a8" />
          </linearGradient>
          <linearGradient id="help" x2="0" y2="1">
            <stop stopColor="#6ba4ec" />
            <stop offset="1" stopColor="#1c5fc0" />
          </linearGradient>
          <linearGradient id="ecu" x2="1" y2="0">
            <stop stopColor="#ffe23c" />
            <stop offset="1" stopColor="#f7ecac" />
          </linearGradient>
        </defs>
      </svg>

      {/* Title bar */}
      <header className="flex h-6 shrink-0 items-center bg-white pl-[2px]">
        <EcuLogo />
        <h1 className="ml-[5px] flex-1">
          Ecumaster Engine Management Unit Client - [C:\Users\thea\Downloads\sugis.emu]
        </h1>
        <div className="flex h-full items-center pr-[2px] pb-[3px]">
          <button type="button" aria-label="Minimize" className="flex w-[46px] justify-center">
            <svg width="11" height="11" stroke="#000">
              <path d="M0 5.500h10" />
            </svg>
          </button>
          <button type="button" aria-label="Restore" className="flex w-[46px] justify-center">
            <svg width="11" height="11" stroke="#000" fill="none">
              <path d="M.5 2.500h7v8h-7ZM2.500 2.500v-2h8v8H8" />
            </svg>
          </button>
          <button type="button" aria-label="Close" className="flex w-[46px] justify-center">
            <svg width="11" height="11" stroke="#000">
              <path d="M.5.5l9.500 9.500M10 .5L.5 10" />
            </svg>
          </button>
        </div>
      </header>

      {/* Menu */}
      <nav className="flex h-5 shrink-0 items-center gap-[15px] border-b border-[#a0a0a0] bg-white pb-[2px] pl-[7px]">
        {MENU.map((m) => (
          <button key={m} type="button">
            {m}
          </button>
        ))}
      </nav>

      {/* Toolbar */}
      <div className="flex h-6 shrink-0 items-center border-t border-white pb-px">
        <ToolButton label="Connect">
          <PlugIcon />
        </ToolButton>
        <ToolButton label="Open project">
          <FolderIcon />
        </ToolButton>
        <ToolButton label="Save project">
          <SaveIcon />
        </ToolButton>
        <Separator />
        <ToolButton label="Open desktops">
          <FolderTreeIcon />
        </ToolButton>
        <ToolButton label="Save desktops">
          <SaveTreeIcon />
        </ToolButton>
        <Separator />
        <ToolButton label="Options">
          <ToolsIcon />
        </ToolButton>
        <Separator />
        <ToolButton label="Help">
          <HelpIcon />
        </ToolButton>
      </div>

      <div className="flex flex-1">
        <Sidebar />
        <main className="flex min-w-0 flex-1 flex-col">
          <DesktopTabs />
          <div className="relative mr-px flex-1 overflow-hidden border-2 border-t-[#7c7c7c] border-r-[#f8f8f8] border-b-[#f8f8f8] border-l-[#7c7c7c] bg-[#ababab]">
            <ChildWindow title="Ignition - Primary trigger" icon={<GridWinIcon />} place="top-0 left-0 h-[383px] w-[376px]" sheet>
              <PropertyGrid id="pri" title="Primary trigger" rows={PRIMARY} thumb="h-[263px]" />
            </ChildWindow>
            <ChildWindow title="Ignition - Secondary trigger" icon={<GridWinIcon />} place="top-0 left-[376px] h-[383px] w-[376px]" sheet>
              <PropertyGrid id="sec" title="Secondary trigger" rows={SECONDARY} />
            </ChildWindow>
            <ChildWindow title="Ignition - Ignition outputs" icon={<GridWinIcon />} place="top-0 left-[752px] h-[388px] w-[376px]" sheet>
              <PropertyGrid id="out" title="Ignition outputs" rows={OUTPUTS} thumb="h-[241px]" />
            </ChildWindow>
            <ChildWindow title="Ignition - Coil dwell time" icon={<ChartWinIcon />} place="top-[360px] left-0 h-[259px] w-[372px]" active>
              <DwellChart />
              <div className="flex-1 bg-[#f0f0f0] pt-1 pl-px">
                <DwellTable />
              </div>
            </ChildWindow>
          </div>
        </main>
      </div>

      <StatusBar />
      <Taskbar />
    </div>
  );
}
